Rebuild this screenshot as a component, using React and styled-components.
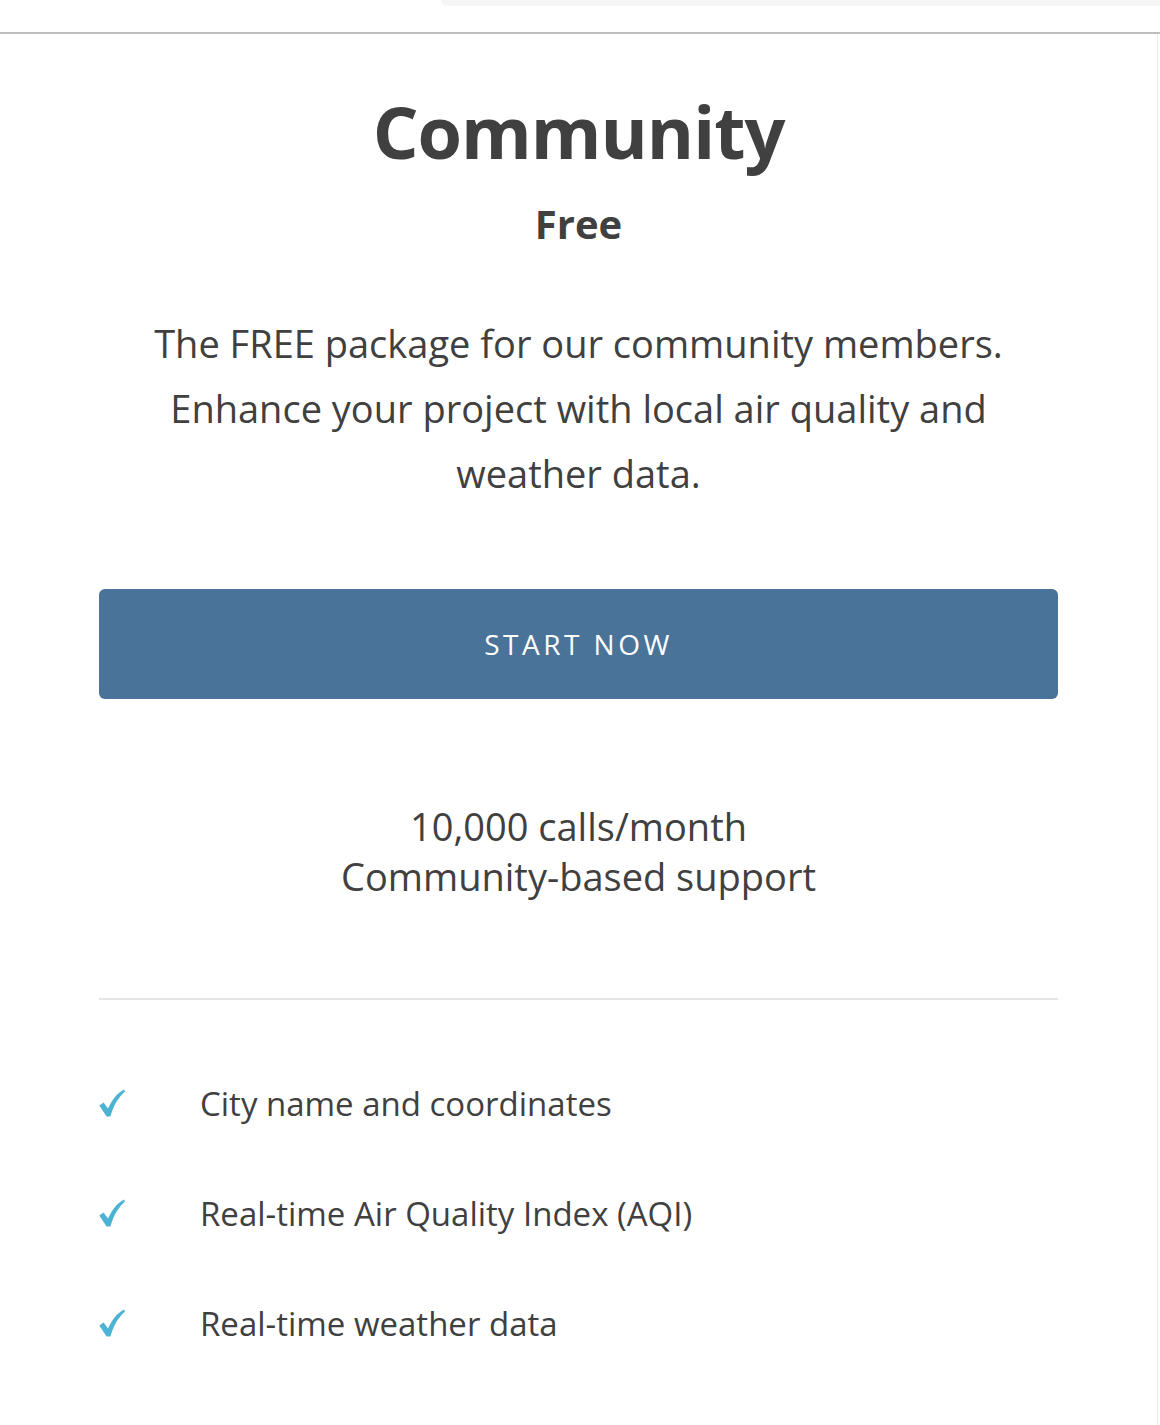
import React from 'react'
import styled, { createGlobalStyle } from 'styled-components'

const GlobalStyle = createGlobalStyle`
  body {
    margin: 0;
    background: #fff;
    font-family: 'Open Sans', 'Noto Sans', sans-serif;
    color: #404040;
  }
`

const features = [
  'City name and coordinates',
  'Real-time Air Quality Index (AQI)',
  'Real-time weather data',
]

const App = () => {
  return (
    <>
      <GlobalStyle />
      <TopBar>
        <Tab />
      </TopBar>
      <Card>
        <Title>Community</Title>
        <Price>Free</Price>
        <Description>
          The FREE package for our community members.
          <br />
          Enhance your project with local air quality and weather data.
        </Description>
        <StartButton>START NOW</StartButton>
        <Limits>
          <div>10,000 calls/month</div>
          <div>Community-based support</div>
        </Limits>
        <Divider />
        <FeatureList>
          {features.map((f) => (
            <Feature key={f}>
              <Check viewBox='0 0 26 28'>
                <path
                  d='M0.3 16.6 L4.6 13.4 L9 19.6 C12.6 11.2 17.6 4.4 25 0.4 L26 2.4 C19.6 8 14.6 16 11.4 27.6 L7.6 27.6 Z'
                  fill='#4cb3d4'
                />
              </Check>
              <FeatureText>{f}</FeatureText>
            </Feature>
          ))}
        </FeatureList>
      </Card>
    </>
  )
}

export default App

const TopBar = styled.div`
  height: 32px;
  display: flex;
  justify-content: flex-end;
  border-bottom: 2px solid #bdbdbd;
`

const Tab = styled.div`
  width: 719px;
  height: 6px;
  background: #f5f5f5;
  border-bottom-left-radius: 8px;
`

const Card = styled.div`
  width: 959px;
  padding: 0 99px 60px 99px;
  border-right: 1px solid #ececec;
  display: flex;
  flex-direction: column;
  align-items: center;
  text-align: center;
`

const Title = styled.h1`
  margin: 54px 0 0;
  font-size: 72px;
  font-weight: 700;
  line-height: 1.2;
  letter-spacing: -1px;
`

const Price = styled.div`
  margin-top: 24px;
  font-size: 40px;
  font-weight: 700;
  line-height: 1.3;
`

const Description = styled.p`
  margin: 61px 30px 0;
  font-size: 38px;
  line-height: 65px;
  font-weight: 400;
`

const StartButton = styled.button`
  margin-top: 83px;
  width: 100%;
  height: 110px;
  border: none;
  border-radius: 6px;
  background: #4a7399;
  color: #fff;
  font-family: inherit;
  font-size: 28px;
  letter-spacing: 3.5px;
  cursor: pointer;
`

const Limits = styled.div`
  margin-top: 102px;
  font-size: 38px;
  line-height: 50px;
`

const Divider = styled.hr`
  align-self: stretch;
  margin: 97px 0 0;
  border: none;
  border-top: 2px solid #e6e6e6;
`

const FeatureList = styled.ul`
  align-self: stretch;
  list-style: none;
  margin: 48px 0 0;
  padding: 0;
  text-align: left;
`

const Feature = styled.li`
  display: flex;
  align-items: center;
  height: 110px;
`

const Check = styled.svg`
  width: 26px;
  height: 28px;
  flex-shrink: 0;
  margin-right: 75px;
`

const FeatureText = styled.span`
  font-size: 33px;
`
